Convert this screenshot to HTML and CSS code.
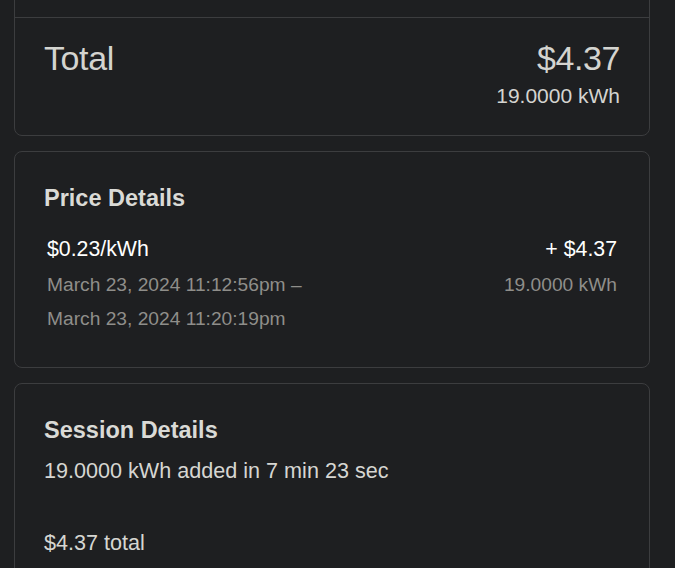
FILE: index.html
```html
<!DOCTYPE html>
<html lang="en">
<head>
    <meta charset="UTF-8">
    <meta name="viewport" content="width=device-width, initial-scale=1.0">
    <title>Charging Receipt</title>
    <link rel="stylesheet" href="styles.css">
</head>
<body>
<div class="receipt">

    <!-- total card, its upper part is scrolled out of view -->
    <div class="card total-card">
        <div class="card-top"></div>
        <div class="total-row">
            <span class="total-label">Total</span>
            <div class="total-values">
                <div class="total-amount">$4.37</div>
                <div class="total-energy">19.0000 kWh</div>
            </div>
        </div>
    </div>

    <div class="card section">
        <h2>Price Details</h2>
        <div class="price-row">
            <div class="price-left">
                <div class="rate">$0.23/kWh</div>
                <div class="muted">March 23, 2024 11:12:56pm &ndash;</div>
                <div class="muted">March 23, 2024 11:20:19pm</div>
            </div>
            <div class="price-right">
                <div class="rate">+ $4.37</div>
                <div class="muted">19.0000 kWh</div>
            </div>
        </div>
    </div>

    <div class="card section">
        <h2>Session Details</h2>
        <p class="info">19.0000 kWh added in 7 min 23 sec</p>
        <p class="info info-total">$4.37 total</p>
    </div>

</div>
</body>
</html>
```

FILE: styles.css
```css
body {
    margin: 0;
    background-color: #1e1f21;
    font-family: "Liberation Sans", Arial, sans-serif;
    color: #d3d3cf;
    overflow: hidden;
}
.receipt {
    display: flex;
    flex-direction: column;
    gap: 15px;
    padding: 0 25px 0 14px;
}
.card {
    border: 1px solid #3c3d3f;
    border-radius: 8px;
    background-color: #1e1f21;
}

/* total */
.total-card {
    margin-top: -41px;
}
.card-top {
    height: 57px;
    border-bottom: 1px solid #3c3d3f;
}
.total-row {
    display: flex;
    justify-content: space-between;
    align-items: flex-start;
    padding: 20px 29px 27px 29px;
}
.total-label,
.total-amount {
    font-size: 34px;
    line-height: 40px;
    letter-spacing: -0.4px;
    color: #d4d4d0;
}
.total-values {
    text-align: right;
}
.total-energy {
    margin-top: 6px;
    font-size: 21px;
    line-height: 24px;
    color: #d4d4d0;
}

/* sections */
.section {
    padding: 32px 29px 31px 29px;
}
.section h2 {
    margin: 0;
    font-size: 23.5px;
    line-height: 28px;
    font-weight: bold;
    color: #dadad6;
}
.price-row {
    display: flex;
    justify-content: space-between;
    padding: 0 3px;
    margin-top: 24px;
}
.price-right {
    text-align: right;
}
.rate {
    font-size: 21.3px;
    line-height: 26px;
    color: #ffffff;
    margin-bottom: 6px;
}
.muted {
    font-size: 19.2px;
    line-height: 34px;
    color: #8f8e8a;
}
.info {
    margin: 14px 0 0 0;
    font-size: 21.6px;
    line-height: 26px;
    color: #d6d6d2;
}
.info-total {
    margin-top: 46px;
}
```
